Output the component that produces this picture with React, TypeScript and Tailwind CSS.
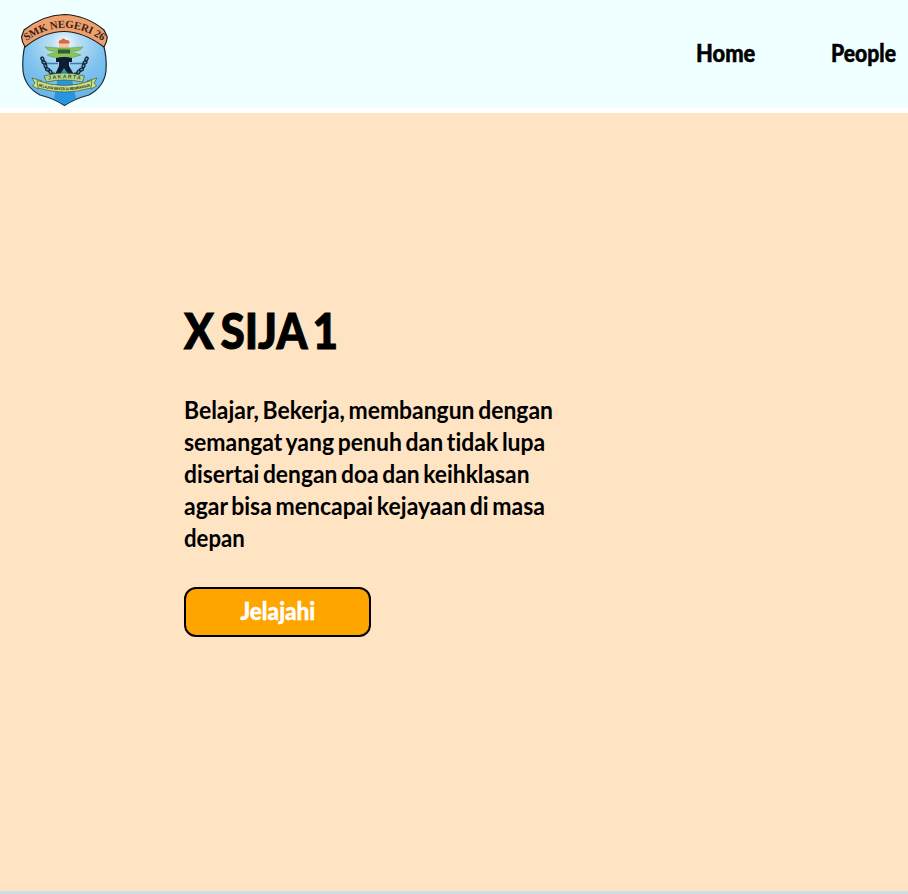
import React from "react";

function ChainLink({ x, y, r }: { x: number; y: number; r: number }) {
  return (
    <ellipse cx={x} cy={y} rx="2.1" ry="1.4" transform={`rotate(${r} ${x} ${y})`} fill="#5e9cc4" stroke="#101c28" strokeWidth="1.200" />
  );
}

const chain = [
  { x: 22.5, y: 46, r: 60 },
  { x: 24, y: 49.5, r: 20 },
  { x: 25.5, y: 53, r: 70 },
  { x: 27.5, y: 56.5, r: 20 },
  { x: 30.5, y: 59, r: 60 },
  { x: 33.5, y: 61.5, r: 10 },
];

function SchoolCrest() {
  return (
    <svg width="88" height="94" viewBox="0 0 88 94" role="img" aria-label="SMK Negeri 26">
      <defs>
        <radialGradient id="sky" cx="50%" cy="18%" r="75%">
          <stop offset="0" stopColor="#f4fbff" />
          <stop offset="0.22" stopColor="#b9def5" />
          <stop offset="0.6" stopColor="#82c4ee" />
          <stop offset="1" stopColor="#65b5eb" />
        </radialGradient>
        <path id="nameArc" d="M4.500 29.5 Q44 0 84.500 29.5" />
        <path id="cityArc" d="M26 67.3 Q44 63 63 67.3" />
        <path id="mottoArc" d="M16 72.500 Q44 82 73 72.500" />
      </defs>
      <path d="M5 32 Q2 44 3 58 Q5 74 20 82 Q35 86 44.500 92.500 Q54 86 69 82 Q84 74 86 58 Q87 44 83.500 32 Q62 16 44.500 16 Q24 16 5 32Z" fill="url(#sky)" stroke="#182c3c" strokeWidth="1.2" />
      <path d="M40 52 L49 52 L56 85.500 L44.500 91.700 L34 85.500Z" fill="#2795df" />
      <path d="M1.500 24 L4 17 Q23 2 44 1.500 Q66 2 84 17 L87.300 24 Q87 29 84 34 Q63 18.500 44 18.500 Q24 18.500 5 34 Q2 29 1.500 24Z" fill="#eda16e" stroke="#211b18" strokeWidth="1.2" />
      <text fontFamily="Liberation Serif, serif" fontSize="10.800" fontWeight="700" fill="#3a2216">
        <textPath href="#nameArc" startOffset="50%" textAnchor="middle" textLength="82">SMK NEGERI 26</textPath>
      </text>
      <path d="M39 31 Q38 27 41 27 Q43 24 46 27 Q51 27 49 31Z" fill="#d9693a" />
      <path d="M39 30.500 H49 V35 H39Z" fill="#f0c8a4" />
      <path d="M25 34 L39 35 H49 L63 34 Q60 39 50 38.500 H38 Q28 39 25 34Z M27 42 Q35 38 44 40 Q52 38 61 42 Q53 46 44 44 Q34 46 27 42Z" fill="#8cc456" stroke="#5b9448" strokeWidth=".5" />
      <path d="M38 36.500 H50 V40.500 H38Z" fill="#2c5f35" />
      <path d="M36 45 Q44 43 52 45 V49 H49 L49 53 L54 61.500 H48.500 L44 55 L40 61.500 H35 L39 53 V49 H36Z" fill="#101d30" />
      <path d="M25 50.500 H38 M50 50.500 H64" stroke="#3c7caf" strokeWidth="1.500" />
      {chain.map((link) => (
        <React.Fragment key={link.y}>
          <ChainLink x={link.x} y={link.y} r={link.r} />
          <ChainLink x={89 - link.x} y={link.y} r={-link.r} />
        </React.Fragment>
      ))}
      <path d="M24 63 Q44 57 64.500 63 L62.500 69 Q44 65 26.500 69Z" fill="#b4d68a" stroke="#405a2a" strokeWidth=".7" />
      <text fontFamily="Liberation Sans, sans-serif" fontSize="5.200" fontWeight="700" fill="#34502c">
        <textPath href="#cityArc" startOffset="50%" textAnchor="middle" textLength="32">JAKARTA</textPath>
      </text>
      <path d="M12 65 L22 68 L18 76 L12.500 73 L15 70Z M77 65 L67 68 L71 76 L76.500 73 L74 70Z" fill="#cde58b" stroke="#405a2a" strokeWidth=".7" />
      <path d="M17 67.500 Q44 77.500 72 67.500 L71 75 Q44 83 18 75Z" fill="#cbe28b" stroke="#405a2a" strokeWidth=".7" />
      <text fontFamily="Liberation Sans, sans-serif" fontSize="4" fontWeight="700" fill="#172914">
        <textPath href="#mottoArc" startOffset="50%" textAnchor="middle" textLength="53" lengthAdjust="spacingAndGlyphs">BELAJAR BEKERJA MEMBANGUN</textPath>
      </text>
    </svg>
  );
}

export default function App() {
  return (
    <div className="flex h-[894px] w-full flex-col overflow-hidden bg-white font-['Lato',sans-serif] text-black [font-variant-ligatures:none]">
      <header className="mb-[5px] flex h-[108px] shrink-0 items-center justify-between bg-[#f0ffff] pl-[20px] pr-[12px]">
        <div className="mt-[11px]"><SchoolCrest /></div>
        <nav className="flex gap-[76px] pb-[2px] text-[24px] font-black leading-8 [-webkit-text-stroke:0.5px_black]">
          <a href="#home" className="block w-[59px] whitespace-nowrap"><span className="inline-block origin-left scale-x-[.91]">Home</span></a>
          <a href="#people" className="block w-[65px] whitespace-nowrap"><span className="inline-block origin-left scale-x-[.88]">People</span></a>
        </nav>
      </header>
      <main className="flex h-[778px] shrink-0 flex-col items-start bg-[#ffe4c4] pl-[184px] pt-[185px]">
        <h1 className="h-[64px] origin-left scale-x-[.9] whitespace-nowrap text-[49px] font-black leading-[64px] [-webkit-text-stroke:1px_black] [word-spacing:-4.5px]">X SIJA 1</h1>
        <p className="mt-[32px] whitespace-nowrap text-[24px] font-bold leading-8 [word-spacing:-2px]">
          <span className="block w-max origin-left scale-x-[.954]">Belajar, Bekerja, membangun dengan</span>
          <span className="block w-max origin-left scale-x-[.957]">semangat yang penuh dan tidak lupa</span>
          <span className="block w-max origin-left scale-x-[.95]">disertai dengan doa dan keihklasan</span>
          <span className="block w-max origin-left scale-x-[.957]">agar bisa mencapai kejayaan di masa</span>
          <span className="block w-max origin-left scale-x-[.925]">depan</span>
        </p>
        <button className="mt-[33px] flex h-[50px] w-[187px] items-center justify-center rounded-[12px] border-2 border-black bg-[#ffa500] pb-[2px] text-[24px] font-black leading-8 text-white [-webkit-text-stroke:0.4px_white]">
          <span className="inline-block scale-x-[.94]">Jelajahi</span>
        </button>
      </main>
      <div className="h-[3px] shrink-0 bg-[#c9dfe3]" />
    </div>
  );
}
